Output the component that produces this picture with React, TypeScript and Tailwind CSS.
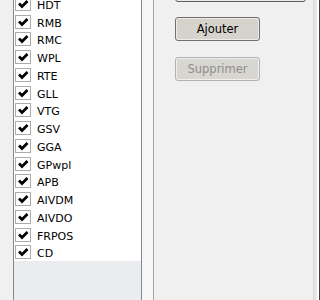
const sentences = [
  "HDT",
  "RMB",
  "RMC",
  "WPL",
  "RTE",
  "GLL",
  "VTG",
  "GSV",
  "GGA",
  "GPwpl",
  "APB",
  "AIVDM",
  "AIVDO",
  "FRPOS",
  "CD",
];

function CheckRow({ label }: { label: string }) {
  return (
    <div className="flex items-center h-[17.75px] pl-px gap-[6px]">
      <div className="w-[16px] h-[14px] border border-[#ababab] bg-white flex items-center justify-center shrink-0">
        <svg width="14" height="12" viewBox="0 0 14 12">
          <polyline points="3,5.5 6,8.5 11.5,3" fill="none" stroke="#000" strokeWidth="2.7" />
        </svg>
      </div>
      <span className="pt-[3px] text-black leading-none">{label}</span>
    </div>
  );
}

export default function App() {
  return (
    <div
      className="w-[320px] h-[300px] overflow-hidden bg-[#f0f0f0] flex text-[11px]"
      style={{ fontFamily: "'DejaVu Sans', sans-serif" }}
    >
      <div className="w-[13px] shrink-0" />

      {/* sentence list */}
      <div className="w-[129px] shrink-0 -mt-[6px] h-[306px] border border-b-0 border-[#828790] flex flex-col">
        <div className="bg-white flex flex-col">
          {sentences.map((s) => (
            <CheckRow key={s} label={s} />
          ))}
        </div>
        <div className="flex-1 bg-[#eaecef]" />
      </div>

      {/* splitter */}
      <div className="w-[11px] shrink-0 bg-[#f6f6f6]" />
      <div className="w-px shrink-0 bg-[#a5a5a5]" />

      {/* buttons */}
      <div className="flex-1 flex flex-col pl-[21px]">
        <div className="w-[131px] h-[24px] -mt-[22px] rounded-[3px] border border-[#5e5e5e] bg-[#ececec]" />
        <button className="mt-[15px] w-[85px] h-[24px] rounded-[3px] border border-[#707070] bg-[#d6d3cd] shadow-[inset_0_0_0_1px_#ecebe8] text-black text-[11.5px] pt-[2px]">
          Ajouter
        </button>
        <button
          disabled
          className="mt-[16px] w-[85px] h-[24px] rounded-[3px] border border-[#b0b3b5] bg-[#d8d6d1] shadow-[inset_0_0_0_1px_#f0efec] text-[#8e8e8e] text-[11.5px] pt-[2px]"
        >
          Supprimer
        </button>
      </div>

      {/* window edge */}
      <div className="flex shrink-0">
        <div className="w-px bg-[#dadada]" />
        <div className="w-[3px] bg-[#e6e6e6]" />
        <div className="w-[2px] bg-white" />
        <div className="w-px bg-[#404040]" />
      </div>
    </div>
  );
}
